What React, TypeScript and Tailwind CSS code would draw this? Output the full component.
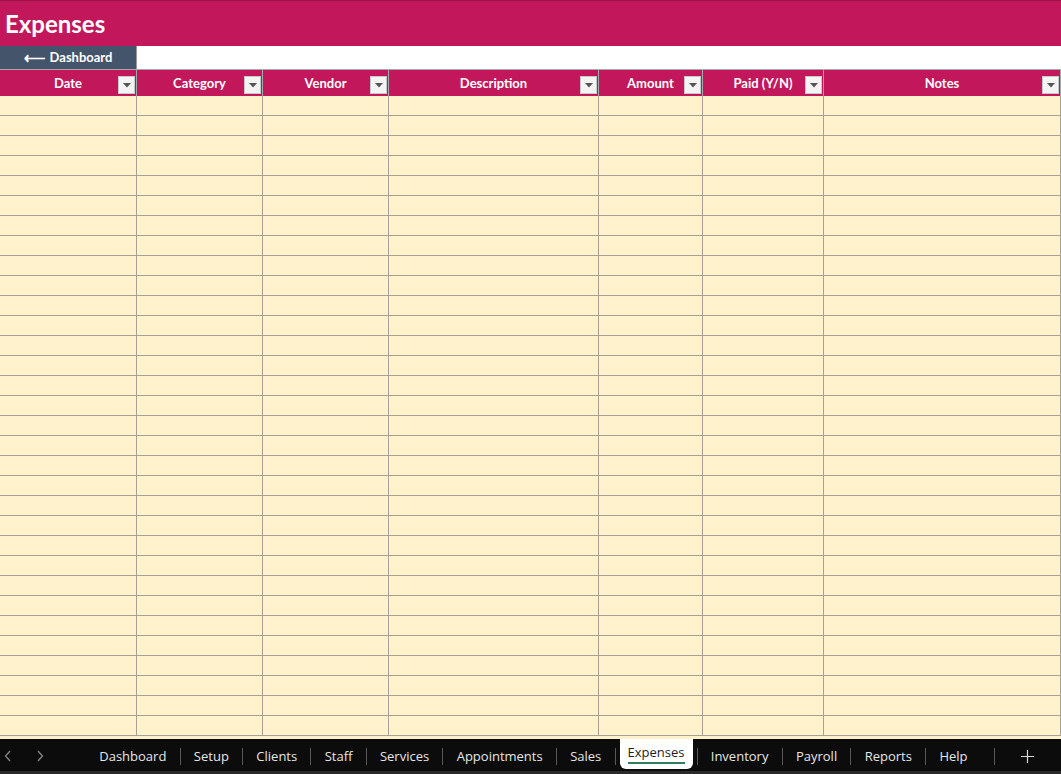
import React from 'react';

const columns = [
  { label: 'Date', width: 'w-[137px]' },
  { label: 'Category', width: 'w-[126px]' },
  { label: 'Vendor', width: 'w-[126px]' },
  { label: 'Description', width: 'w-[210px]' },
  { label: 'Amount', width: 'w-[104px]' },
  { label: 'Paid (Y/N)', width: 'w-[121px]' },
  { label: 'Notes', width: 'flex-1' },
];

const sheets = [
  'Dashboard',
  'Setup',
  'Clients',
  'Staff',
  'Services',
  'Appointments',
  'Sales',
  'Expenses',
  'Inventory',
  'Payroll',
  'Reports',
  'Help',
];

const rowCount = 32;

// Botón de filtro tipo Excel
const FilterButton: React.FC = () => (
  <div className="absolute right-[1px] top-[6px] w-[17px] h-[18px] bg-[#f4f4f4] border border-[#c8c8c8] flex items-center justify-center">
    <svg width="8" height="5" viewBox="0 0 8 5">
      <path d="M0 0 L8 0 L4 4.5 Z" fill="#555" />
    </svg>
  </div>
);

const App: React.FC = () => {
  return (
    <div className="h-[774px] w-full flex flex-col overflow-hidden bg-white font-['Lato','Liberation_Sans',sans-serif]">
      {/* Title */}
      <div className="h-[46px] flex-shrink-0 bg-[#c2185b] border-t border-[#9a1448] flex items-center px-[5px]">
        <h1 className="text-white font-bold text-[24px] leading-none">Expenses</h1>
      </div>

      {/* Back button row */}
      <div className="h-[23px] flex-shrink-0 flex">
        <button className="w-[137px] h-full bg-[#44546a] text-white font-bold text-[13px] flex items-center justify-center gap-1 border-r border-[#9a9a9a]">
          <span className="text-[15px] leading-none">⟵</span>
          <span>Dashboard</span>
        </button>
        <div className="flex-1 bg-white" />
      </div>

      {/* Header */}
      <div className="h-[27px] flex-shrink-0 flex bg-[#c2185b] border-t border-[#a8a8a8]">
        {columns.map((col) => (
          <div
            key={col.label}
            className={`${col.width} relative h-full border-r border-[#a8a8a8] flex items-center justify-center pt-[1px] text-white font-bold text-[13px]`}
          >
            {col.label}
            <FilterButton />
          </div>
        ))}
      </div>

      {/* Rows */}
      <div className="flex-1 overflow-hidden bg-[#fff2cc]">
        {Array.from({ length: rowCount }).map((_, i) => (
          <div key={i} className="h-[20px] flex border-b border-[#a6a193]">
            {columns.map((col) => (
              <div key={col.label} className={`${col.width} h-full border-r border-[#a6a193]`} />
            ))}
          </div>
        ))}
      </div>

      {/* Sheet tabs */}
      <div className="h-[35px] flex-shrink-0 bg-[#0c0c0c] border-b-[3px] border-[#2a2a2a] flex items-center font-['Open_Sans','Noto_Sans',sans-serif] text-[13px]">
        <div className="w-[86px] flex items-center gap-[22px] pl-[3px] pt-[2px] text-[#8a8a8a]">
          <svg width="10" height="12" viewBox="0 0 10 12">
            <path d="M7 1 L2.5 6 L7 11" stroke="#8a8a8a" strokeWidth="1.2" fill="none" />
          </svg>
          <svg width="10" height="12" viewBox="0 0 10 12">
            <path d="M3 1 L7.5 6 L3 11" stroke="#8a8a8a" strokeWidth="1.2" fill="none" />
          </svg>
        </div>
        <div className="flex items-center h-full">
          {sheets.map((name, i) => {
            const active = name === 'Expenses';
            return (
              <React.Fragment key={name}>
                {active ? (
                  <div className="h-[30px] self-start mx-[4px] bg-white rounded-b-md px-[8px] flex flex-col items-center justify-center text-[#1e1e1e]">
                    <span className="leading-tight">{name}</span>
                    <span className="h-[2px] w-full bg-[#2e7d5b] mt-[1px]" />
                  </div>
                ) : (
                  <div className="px-[13.25px] pt-[3px] text-[#e6e6e6]">{name}</div>
                )}
                {i < sheets.length - 1 && (
                  <span className="w-px h-[17px] mt-[2px] bg-[#5a5a5a]" />
                )}
              </React.Fragment>
            );
          })}
          <span className="w-px h-[17px] mt-[2px] bg-[#5a5a5a] ml-[13px]" />
        </div>
        <div className="flex-1 flex justify-end pr-[27px] pt-[2px]">
          <svg width="13" height="13" viewBox="0 0 13 13">
            <path d="M6.5 0 V13 M0 6.5 H13" stroke="#d8d8d8" strokeWidth="1.2" />
          </svg>
        </div>
      </div>
    </div>
  );
};

export default App;
